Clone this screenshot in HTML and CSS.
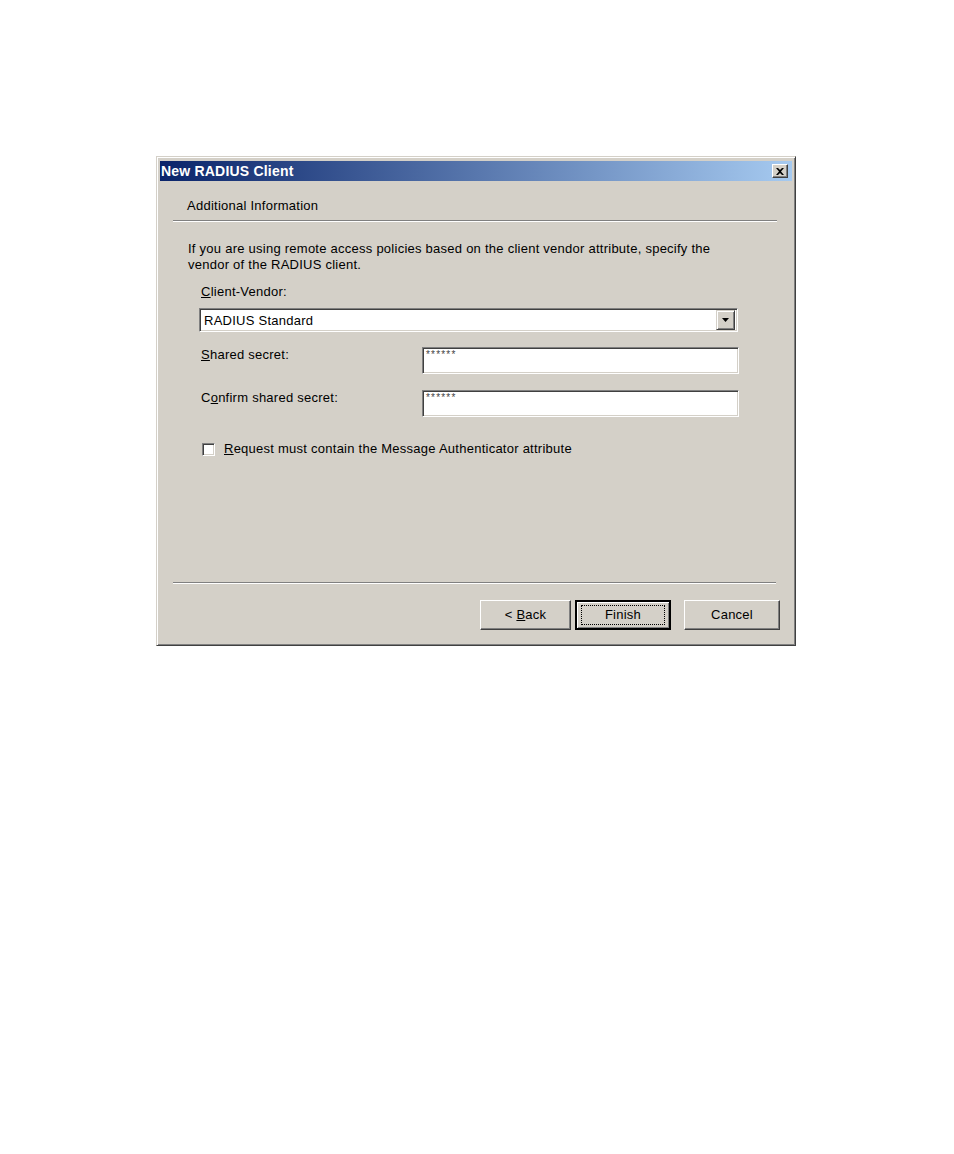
FILE: index.html
```html
<!DOCTYPE html>
<html>
<head>
<meta charset="utf-8">
<link rel="stylesheet" href="styles.css">
</head>
<body>
<div class="page">
  <div class="dialog">
    <div class="titlebar">
      <span class="title">New RADIUS Client</span>
      <span class="close"><svg width="8" height="7" viewBox="0 0 8 7"><path d="M0 0h2l2 2 2-2h2L5 3.5 8 7H6L4 5 2 7H0l3-3.5z" fill="#000"/></svg></span>
    </div>
    <div class="header">Additional Information</div>
    <div class="sep head-sep"></div>
    <div class="body">
      <p class="desc">If you are using remote access policies based on the client vendor attribute, specify the vendor of the RADIUS client.</p>
      <div class="label vendor-label"><u>C</u>lient-Vendor:</div>
      <div class="select">
        <span class="select-text">RADIUS Standard</span>
        <span class="drop"><svg width="7" height="4" viewBox="0 0 7 4"><path d="M0 0h7L3.5 4z" fill="#000"/></svg></span>
      </div>
      <div class="row row-secret">
        <span class="label"><u>S</u>hared secret:</span>
        <div class="input"><span class="pw">******</span></div>
      </div>
      <div class="row row-confirm">
        <span class="label">C<u>o</u>nfirm shared secret:</span>
        <div class="input"><span class="pw">******</span></div>
      </div>
      <div class="check-row">
        <span class="checkbox"></span>
        <span class="label"><u>R</u>equest must contain the Message Authenticator attribute</span>
      </div>
    </div>
    <div class="sep foot-sep"></div>
    <div class="buttons">
      <div class="btn"><span>&lt; <u>B</u>ack</span></div>
      <div class="btn default"><span class="focus">Finish</span></div>
      <div class="btn cancel">Cancel</div>
    </div>
  </div>
</div>
</body>
</html>
```
FILE: styles.css
```css
html, body {
  margin: 0;
  padding: 0;
  background: #fff;
}
.page {
  padding: 156px 0 0 156px;
  height: 998px;
}
.dialog {
  box-sizing: border-box;
  width: 640px;
  height: 490px;
  background: #d4d0c8;
  border-top: 1px solid #d4d0c8;
  border-left: 1px solid #d4d0c8;
  border-right: 1px solid #404040;
  border-bottom: 1px solid #404040;
  box-shadow: inset 1px 1px 0 #fff, inset -1px -1px 0 #808080;
  padding: 4px 3px 3px 3px;
  font-family: "Liberation Sans", Arial, sans-serif;
  font-size: 13px;
  letter-spacing: 0.25px;
  color: #000;
  display: flex;
  flex-direction: column;
}
.titlebar {
  height: 20px;
  background: linear-gradient(to right, #0a246a, #a6caf0);
  display: flex;
  align-items: center;
  justify-content: space-between;
  padding: 0 4px 0 1px;
}
.title {
  color: #fff;
  font-weight: bold;
  font-size: 14px;
  letter-spacing: 0.2px;
  margin-top: -1px;
}
.close {
  width: 16px;
  height: 14px;
  box-sizing: border-box;
  background: #d4d0c8;
  border-top: 1px solid #fff;
  border-left: 1px solid #fff;
  border-right: 1px solid #404040;
  border-bottom: 1px solid #404040;
  box-shadow: inset -1px -1px 0 #808080;
  display: flex;
  align-items: center;
  justify-content: center;
}
.header {
  padding: 17px 0 0 27px;
  height: 22px;
  line-height: 16px;
}
.sep {
  border-top: 1px solid #808080;
  border-bottom: 1px solid #fff;
  height: 0;
}
.head-sep {
  margin: 0 15px 0 13px;
}
.body {
  flex: 1;
  padding-left: 28px;
}
.desc {
  margin: 19px 0 0 0;
  line-height: 16px;
  width: 560px;
}
.label {
  line-height: 16px;
}
.vendor-label {
  margin: 11px 0 0 13px;
}
.select {
  margin: 8px 0 0 11px;
  width: 539px;
  height: 24px;
  box-sizing: border-box;
  background: #fff;
  border-top: 1px solid #808080;
  border-left: 1px solid #808080;
  border-right: 1px solid #fff;
  border-bottom: 1px solid #fff;
  box-shadow: inset 1px 1px 0 #404040, inset -1px -1px 0 #d4d0c8;
  display: flex;
  align-items: center;
  justify-content: space-between;
  padding: 0 2px 0 4px;
}
.drop {
  width: 19px;
  height: 20px;
  box-sizing: border-box;
  background: #d4d0c8;
  border-top: 1px solid #d4d0c8;
  border-left: 1px solid #d4d0c8;
  border-right: 1px solid #404040;
  border-bottom: 1px solid #404040;
  box-shadow: inset 1px 1px 0 #fff, inset -1px -1px 0 #808080;
  display: flex;
  align-items: center;
  justify-content: center;
}
.row {
  display: flex;
  align-items: flex-start;
  padding-left: 13px;
}
.row .label {
  width: 221px;
}
.row-secret {
  margin-top: 15px;
}
.row-confirm {
  margin-top: 16px;
}
.input {
  width: 317px;
  height: 27px;
  box-sizing: border-box;
  background: #fff;
  border-top: 1px solid #808080;
  border-left: 1px solid #808080;
  border-right: 1px solid #fff;
  border-bottom: 1px solid #fff;
  box-shadow: inset 1px 1px 0 #404040, inset -1px -1px 0 #d4d0c8;
  padding: 2px 0 0 3px;
}
.pw {
  font-size: 10px;
  line-height: 10px;
  color: #444;
  letter-spacing: 1.2px;
  display: block;
}
.check-row {
  display: flex;
  align-items: center;
  margin: 24px 0 0 14px;
}
.checkbox {
  width: 13px;
  height: 13px;
  box-sizing: border-box;
  background: #fff;
  border-top: 1px solid #808080;
  border-left: 1px solid #808080;
  border-right: 1px solid #fff;
  border-bottom: 1px solid #fff;
  box-shadow: inset 1px 1px 0 #404040, inset -1px -1px 0 #d4d0c8;
  margin-right: 9px;
}
.foot-sep {
  margin: 1px 16px 0 13px;
}
.buttons {
  display: flex;
  justify-content: flex-end;
  padding: 16px 12px 12px 0;
  gap: 4px;
}
.btn {
  width: 91px;
  height: 30px;
  box-sizing: border-box;
  background: #d4d0c8;
  border-top: 1px solid #fff;
  border-left: 1px solid #fff;
  border-right: 1px solid #404040;
  border-bottom: 1px solid #404040;
  box-shadow: inset -1px -1px 0 #808080;
  display: flex;
  align-items: center;
  justify-content: center;
  line-height: 16px;
}
.btn.default {
  width: 96px;
  border: 2px solid #000;
  box-shadow: inset 1px 1px 0 #fff, inset -1px -1px 0 #808080;
}
.focus {
  box-sizing: border-box;
  width: 84px;
  height: 20px;
  border: 1px dotted #000;
  display: flex;
  align-items: center;
  justify-content: center;
}
.btn.cancel {
  margin-left: 9px;
  width: 96px;
}
```
